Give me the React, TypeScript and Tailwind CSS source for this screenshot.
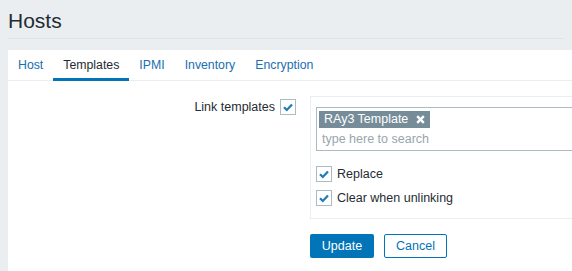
const Check = () => (
  <span className="flex h-[16px] w-[16px] shrink-0 items-center justify-center border border-[#acbbc2] bg-white">
    <svg width="12" height="12" viewBox="0 0 12 12">
      <path d="M2 6.2 L4.8 9 L10 3.4" fill="none" stroke="#1f7ab8" strokeWidth="2.2" />
    </svg>
  </span>
);

const tabs = ['Host', 'Templates', 'IPMI', 'Inventory', 'Encryption'];

export default function App() {
  return (
    <div
      className="h-[271px] w-[572px] overflow-hidden bg-[#ebeef1] text-[12.5px] text-[#1f2c33]"
      style={{ fontFamily: '"Liberation Sans", Arial, sans-serif' }}
    >
      <div className="mx-[8px] h-[39px] border-b border-[#dfe4e7] pt-[9px]">
        <h1 className="text-[21px] leading-[24px]">Hosts</h1>
      </div>

      <div className="ml-[8px] mt-[11px] w-[620px] bg-white">
        <div className="flex h-[31px] border-b border-[#ebeef1] text-[12.3px]">
          {tabs.map((t) => (
            <div
              key={t}
              className={
                t === 'Templates'
                  ? 'h-[31px] border-b-[3px] border-[#0275b8] px-[10px] pt-[7px] leading-[16px] text-[#1f2c33]'
                  : 'h-[31px] border-b-[3px] border-transparent px-[10px] pt-[7px] leading-[16px] text-[#1a6faf]'
              }
            >
              {t}
            </div>
          ))}
        </div>

        <div className="pb-[13px] pt-[15px]">
          <div className="flex">
            <div className="flex w-[288px] items-start justify-end gap-[5px] pt-[3px]">
              <span className="leading-[16px]">Link templates</span>
              <Check />
            </div>
            <div className="ml-[14px] w-[300px] border border-[#ebeef1] px-[5px] pb-[12px] pt-[10px]">
              <div className="h-[44px] border border-[#acbbc2] px-[2px] pt-[3px]">
                <div className="flex">
                  <span className="flex h-[17px] items-center gap-[8px] bg-[#768d99] pl-[5px] pr-[5px] leading-[17px] text-white">
                    RAy3 Template
                    <svg width="9" height="9" viewBox="0 0 9 9">
                      <path d="M1.2 1.2 L7.8 7.8 M7.8 1.2 L1.2 7.8" stroke="white" strokeWidth="2.4" />
                    </svg>
                  </span>
                </div>
                <div className="mt-[3px] pl-[3px] leading-[16px] text-[#98a6ad]">type here to search</div>
              </div>
              <div className="mt-[15px] flex items-center gap-[5px]">
                <Check />
                <span className="leading-[16px]">Replace</span>
              </div>
              <div className="mt-[8px] flex items-center gap-[5px]">
                <Check />
                <span className="leading-[16px]">Clear when unlinking</span>
              </div>
            </div>
          </div>

          <div className="ml-[302px] mt-[15px] flex gap-[10px]">
            <button className="h-[24px] w-[64px] rounded-[2px] bg-[#0275b8] text-white">Update</button>
            <button className="h-[24px] w-[63px] rounded-[2px] border border-[#0275b8] bg-white text-[#0275b8]">
              Cancel
            </button>
          </div>
        </div>
      </div>
    </div>
  );
}
